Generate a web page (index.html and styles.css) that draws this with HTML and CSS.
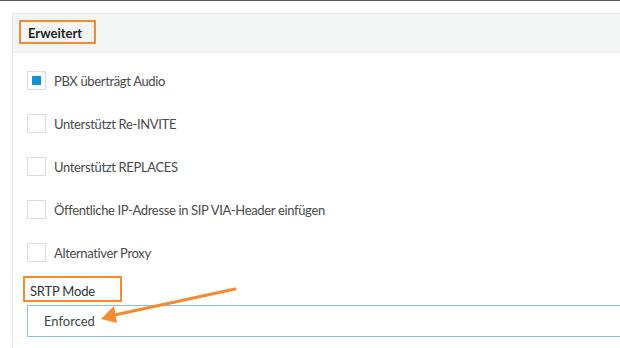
FILE: index.html
```html
<!DOCTYPE html>
<html lang="de">
<head>
    <meta charset="UTF-8">
    <title>Erweitert</title>
    <link rel="stylesheet" href="styles.css">
</head>
<body>
    <div class="topline"></div>

    <!-- Panel -->
    <div class="panel">
        <div class="panel-head">
            <span class="mark title">Erweitert</span>
        </div>

        <div class="panel-body">
            <label class="check-row">
                <span class="box checked"></span>
                <span>PBX überträgt Audio</span>
            </label>
            <label class="check-row">
                <span class="box"></span>
                <span>Unterstützt Re-INVITE</span>
            </label>
            <label class="check-row">
                <span class="box"></span>
                <span>Unterstützt REPLACES</span>
            </label>
            <label class="check-row">
                <span class="box"></span>
                <span>Öffentliche IP-Adresse in SIP VIA-Header einfügen</span>
            </label>
            <label class="check-row">
                <span class="box"></span>
                <span>Alternativer Proxy</span>
            </label>

            <div class="field">
                <span class="mark field-label">SRTP Mode</span>
                <div class="select">Enforced</div>
            </div>
        </div>
    </div>

    <!-- Pfeil -->
    <svg class="arrow" width="620" height="348" viewBox="0 0 620 348">
        <line x1="235" y1="289" x2="110" y2="316" stroke="#f7892e" stroke-width="3" stroke-linecap="round"/>
        <path d="M101 319 L114 306 L117 323 Z" fill="#f7892e"/>
    </svg>
</body>
</html>
```

FILE: styles.css
```css
html, body {
    margin: 0;
    padding: 0;
    background-color: #ffffff;
    font-family: "Source Sans Pro", Lato, "Open Sans", sans-serif;
    color: #4a4a4a;
    width: 620px;
    height: 348px;
    overflow: hidden;
    position: relative;
}

.topline {
    height: 1px;
    background-color: #5a5a5a;
}

/* Panel */
.panel {
    margin: 12px 0 0 12px;
    border: 1px solid #e4e8e8;
    border-right: none;
    height: 340px;
}

.panel-head {
    background-color: #f4f6f6;
    height: 39px;
    border-bottom: 1px solid #eceeee;
    padding: 6px 0 0 6px;
    box-sizing: border-box;
}

.mark {
    display: inline-block;
    border: 2px solid #f7892e;
    box-sizing: border-box;
}

.title {
    width: 77px;
    height: 24px;
    padding: 3px 0 0 7px;
    font-size: 13px;
    font-weight: bold;
    color: #1e1e1e;
}

.panel-body {
    padding: 18px 0 0 14px;
}

.check-row {
    display: flex;
    align-items: center;
    gap: 8px;
    height: 19px;
    margin-bottom: 24px;
    font-size: 13px;
    letter-spacing: -0.35px;
    color: #4a4a4a;
}

.box {
    width: 17px;
    height: 17px;
    border: 1px solid #dadddd;
    background-color: #ffffff;
    position: relative;
}

.box.checked::after {
    content: "";
    position: absolute;
    left: 4px;
    top: 4px;
    width: 9px;
    height: 9px;
    background-color: #1591d6;
}

.field {
    margin-top: -10px;
}

.field-label {
    width: 99px;
    height: 26px;
    margin-left: -4px;
    padding: 5px 0 0 5px;
    font-size: 13px;
    letter-spacing: -0.2px;
    color: #333333;
}

.select {
    margin-top: 3px;
    height: 32px;
    border: 1px solid #8dc1e3;
    border-right: none;
    box-sizing: border-box;
    padding: 7px 0 0 16px;
    font-size: 13px;
    color: #444444;
}

.arrow {
    position: absolute;
    left: 0;
    top: 0;
}
```
